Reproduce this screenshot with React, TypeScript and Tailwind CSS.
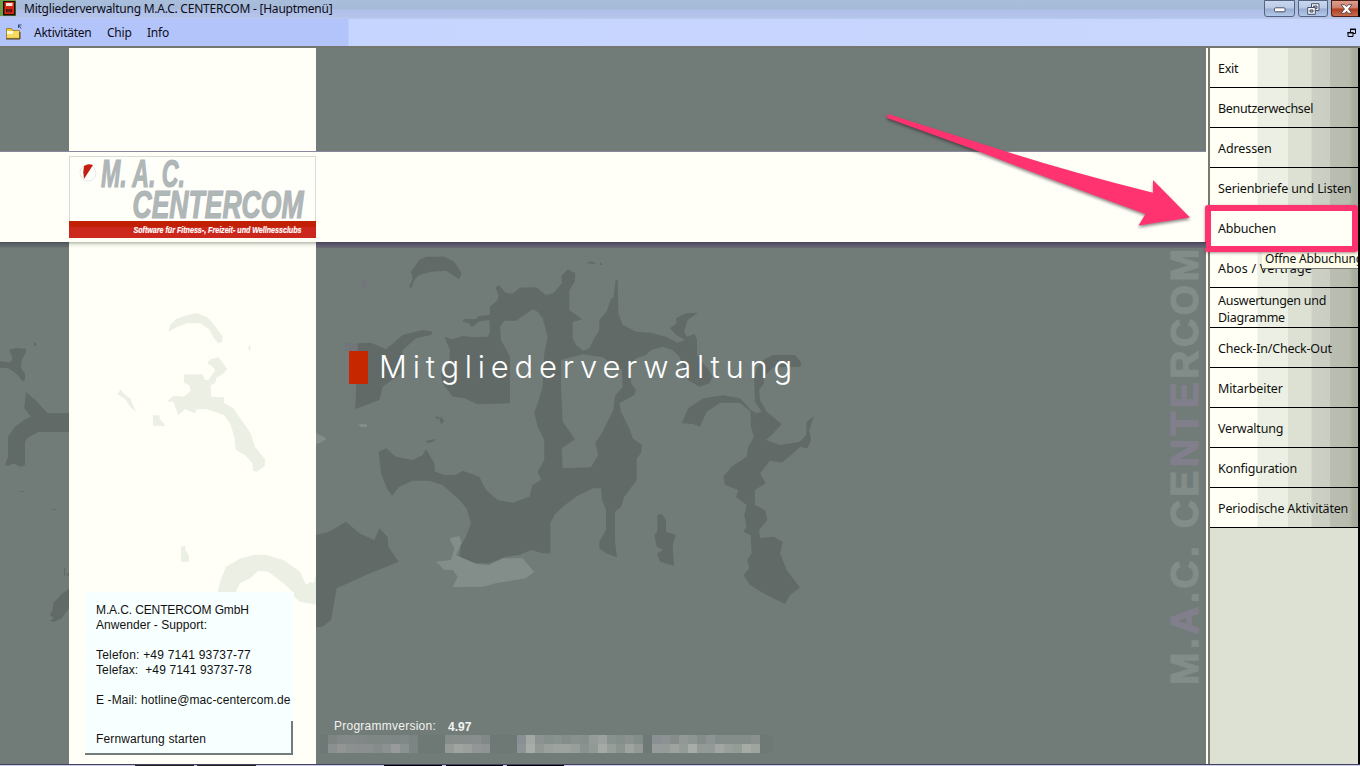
import React from "react";

const UI = "font-['Noto_Sans',sans-serif]";
const DARK = "#616a66";
const PALE = "#ecefe3";

type Item = { label: string; active?: boolean; cls: string };

const items: Item[] = [
  { label: "Exit", cls: "tracking-[-0.3px]" },
  { label: "Benutzerwechsel", cls: "tracking-[-0.33px]" },
  { label: "Adressen", cls: "tracking-[-0.1px]" },
  { label: "Serienbriefe und Listen", cls: "tracking-[-0.12px]" },
  { label: "Abbuchen", active: true, cls: "tracking-[-0.2px]" },
  { label: "Abos / Verträge", cls: "tracking-[0.2px]" },
  { label: "Auswertungen und Diagramme", cls: "tracking-[-0.28px]" },
  { label: "Check-In/Check-Out", cls: "tracking-[-0.2px]" },
  { label: "Mitarbeiter", cls: "tracking-[-0.1px]" },
  { label: "Verwaltung", cls: "tracking-[-0.2px]" },
  { label: "Konfiguration", cls: "tracking-[-0.15px]" },
  { label: "Periodische Aktivitäten", cls: "tracking-[-0.18px]" },
];

function TitleBar() {
  return (
    <header className="flex h-[19px] shrink-0 items-start bg-[linear-gradient(180deg,#a9bedb_0px,#a5bad8_9px,#b0bfe9_10px,#b4c4ea_17px,#b9cce9_19px)]">
      <svg width="16" height="17" viewBox="0 0 16 17" className="shrink-0">
        <rect width="16" height="16" fill="#6d9c4b" />
        <rect x="3" y="1" width="12.5" height="14.5" fill="#1d0f0c" />
        <rect x="4.5" y="2" width="9.5" height="12" fill="#d22a16" />
        <rect x="6" y="3" width="6.5" height="3" fill="#f6e6dd" />
        <path d="M6.5 9v3M8 9.5v3M10 9.5v3M11.500 9v3M6 10h6" stroke="#40100a" />
      </svg>
      <h1 className={`ml-2 flex-1 whitespace-nowrap text-[12px] leading-[17px] tracking-[-0.23px] text-[#0c0d18] ${UI}`}>
        Mitgliederverwaltung M.A.C. CENTERCOM - [Hauptmenü]
      </h1>
      <div className="flex h-[17px] gap-[3px]">
        <button aria-label="Minimieren" className="flex h-[17px] w-[31px] items-center justify-center rounded-b-[3px] border border-[#56627f] bg-[linear-gradient(180deg,#c9d8ee_0%,#b9cae6_48%,#98add2_52%,#b1c9e8_100%)]">
          <svg width="12" height="6" viewBox="0 0 12 6" className="mt-[3px]"><rect x=".5" y=".8" width="10.500" height="4" rx="1" fill="#fff" stroke="#4c5165" /></svg>
        </button>
        <button aria-label="Verkleinern" className="flex h-[17px] w-[30px] items-center justify-center rounded-b-[3px] border border-[#56627f] bg-[linear-gradient(180deg,#c9d8ee_0%,#b9cae6_48%,#98add2_52%,#b1c9e8_100%)]">
          <svg width="13" height="12" viewBox="0 0 13 12" className="shrink-0" fill="#f4f5fb" stroke="#4c5165">
            <path d="M4.500.700h7.500v6.800h-7.500z" /><path d="M6.500 3h3.500v2.500h-3.500z" fill="#a9bbdc" />
            <path d="M.7 4.500h7.600v6.800H.7z" /><path d="M3 7h3v2H3z" fill="#a9bbdc" />
          </svg>
        </button>
        <button aria-label="Schließen" className="flex h-[17px] w-[27px] items-center justify-center rounded-bl-[3px] border border-r-0 border-[#4f1f1c] bg-[linear-gradient(180deg,#dda08e_0%,#cd7c68_48%,#af3c1f_52%,#c66c4c_100%)]">
          <svg width="13" height="10" viewBox="0 0 13 10" className="ml-[2px]">
            <path d="M1 .7h3.500l2 2 2-2H12L8.500 5 12 9.300H8.500l-2-2-2 2H1L4.500 5z" fill="#fff" stroke="#55484e" strokeWidth=".9" />
          </svg>
        </button>
        <div className="-ml-[3px] h-[17px] w-[2px] bg-black" />
      </div>
    </header>
  );
}

function MenuBar() {
  return (
    <nav className="flex h-[29px] shrink-0 items-center border-b-2 border-[#73776f] bg-[linear-gradient(90deg,#b3c4fa_0px,#b3c4fa_348px,#c6d5ff_349px,#c9d6fd_1358px)]">
      <svg width="18" height="17" viewBox="0 0 18 17" className="ml-[5px] shrink-0">
        <path d="M1.500 4.500h5l1.500 2h6.500v8h-13z" fill="#e9c23f" stroke="#96762a" strokeWidth=".8" />
        <path d="M2 7h12v6.500H2z" fill="#f6da62" />
        <path d="M2 7h6v3H2z" fill="#fffbd0" />
        <path d="M1 15h14V8" stroke="#524018" fill="none" />
        <path d="M13 1h3.500M13.500 1v3M14 1.500l2 3" stroke="#2b3a66" strokeWidth=".9" fill="none" />
      </svg>
      <ul className={`ml-[11px] flex flex-1 gap-[15.5px] text-[12px] leading-4 tracking-[-0.25px] text-[#0c0d18] ${UI}`}>
        <li>Aktivitäten</li>
        <li>Chip</li>
        <li>Info</li>
      </ul>
      <svg width="10" height="10" viewBox="0 0 10 10" className="mr-[3px] shrink-0" fill="none" stroke="#000">
        <path d="M3.500 4V1.500h5v4H6" /><path d="M3 1.300h6" strokeWidth="1.500" />
        <path d="M1 4.500h5v4H1z" /><path d="M.5 4.700h6" strokeWidth="1.500" />
      </svg>
    </nav>
  );
}

function Stains() {
  return (
    <svg className="pointer-events-none absolute inset-0" width="1206" height="716" viewBox="0 48 1206 716">
      <g transform="translate(0 300) scale(.33333)">
        <g fill={DARK}>
          <path d="M28 150L45 144L78 146L77 158L65 180L63 203L75 222L75 240L68 244L50 222L25 205L0 203V183L30 188L38 175Z" />
          <path d="M78 276L110 304L142 339H207V396H115L85 412L75 425V495L62 500L45 492L35 492L25 498L15 495L24 470V410L45 380L72 360L92 350L73 325Z" />
          <path d="M207 868L185 882L160 910L158 930L150 945L162 955L150 962L160 966L185 955L207 925Z" />
          <path d="M102 128h6l2 6-5 5-3-5zM60 574h12v2h-12zM155 627h13v2h-13zM196 822l11-3v10zM192 803h3v25h-3z" />
        </g>
        <g fill={PALE}>
          <path d="M505 95L512 72L530 56L560 46L590 39L622 52L640 72L655 92L668 108L666 126L655 130L640 112L628 88L600 70H560L530 82Z" />
          <path d="M552 223H608L614 240H625L646 210L635 198L622 190L630 178L655 172L668 188L682 208L665 225L650 232L645 250L632 256L634 290L672 292V308L700 325L728 365L752 400L765 440L795 478L794 498L770 515L759 512L757 490L735 465L707 450L703 410L690 370L672 345L620 328H590L585 340L555 328L535 345L520 305H500L520 287L552 290L572 272L568 256L552 248Z" />
          <path d="M353 282L362 268L370 280L392 296L398 315L409 336L392 322L378 300ZM459 346H480L478 356L490 368L496 380L480 377H459ZM738 152L752 133L750 155L744 145ZM543 740L556 738V750L567 768V785H543Z" />
          <path d="M652 879L662 840L678 800L720 776L760 765H800L850 780L900 815L918 855L930 845L940 850L948 828V914L900 905L882 890V879L850 850L805 815L775 812L750 835L720 850L705 879Z" />
        </g>
      </g>
      <g transform="translate(316 240) scale(.33333)">
        <g fill={DARK} fillRule="evenodd">
          <path d="M385 290L410 298L440 288L470 292L515 290L522 275L520 240L490 244L468 262L458 250L440 245L444 236L478 238L490 228L522 225V200L545 180L548 165L538 142L550 136L568 158L590 161L612 143L660 142L690 165L712 160L738 130L736 108L755 88L778 100L776 125L760 150V210L798 238L785 242L770 245V295L780 315L802 333L820 325L835 295L850 270V240L872 215L884 178L893 172L899 118L905 122L907 220L920 255L960 275L1005 278L1050 290L1085 308L1108 300L1080 285L1062 265L1082 250L1080 235L1110 220L1145 218L1115 240L1104 275L1113 290L1136 282L1143 300V345L1160 370L1175 385L1190 410L1180 430L1150 440L1115 420L1110 400L1090 350L1070 330L1040 320L1005 330L990 345L960 355L945 385V430L960 450L955 465L910 490L915 515L942 570L950 595L978 615L975 640L962 655V720L925 770L915 800L897 815V905L903 952L870 940L850 925V905L870 870V810L858 780L855 745H830L780 770L740 800L715 825L703 850V940H680L645 930L610 945L570 950L520 970H480L430 950L435 915L450 890L465 850L452 805L430 780L380 735L340 722H290L250 740L228 767L215 750L195 700L188 635L210 625L240 650L290 660L320 645L330 628L355 670L357 695L385 705H420L440 692L490 710L510 750L545 780L590 788L640 770L650 735L675 720L665 695L685 660V600L665 560L655 520L665 490L680 440L685 340L695 290L680 235L665 215L650 208L600 242L565 242L552 260L555 300L582 350V490L485 493L445 475L410 470L380 430L375 400L400 370L402 330ZM735 360L800 343L860 352L918 390L920 440L897 468L892 510L860 575L838 610L847 645L825 682L740 685L737 625L777 598L740 545L735 440Z" />
          <path d="M285 95L310 60L330 50H385L415 65L437 100L430 118L390 92L345 95L310 105L295 120L285 146L280 138L290 118Z" />
          <path d="M125 310L165 308L210 328L260 285L320 270L350 275L345 285L300 295L260 330L255 400L200 440L190 480L150 495L118 507Z" />
          <path d="M0 885L40 875L90 845L130 880L175 900L190 865L215 890L217 920L248 965L150 1005L62 1045L45 1140L20 1160L0 1162Z" />
          <path d="M358 530h12v6h-10zM375 530l10 12-8 10-7-10zM330 602l30-5-8 8-16 5z" />
        </g>
        <path d="M400 895L430 888L437 910L420 945L480 972L520 975L560 955H620L645 985L655 995L630 1015L540 1030L500 1040L410 1042L425 1010L410 990H385L360 965L405 960L415 925ZM128 553h25v8h-20zM0 578l32 18-18 12-14 4z" fill="#838d89" />
        <path d="M138 120h12v24h-12zM88 310h37v22h-37z" fill="#746f80" opacity=".6" />
      </g>
      <g transform="translate(560 240) scale(.33333)" fill={DARK}>
        <path d="M365 550L385 505L430 475L490 466L540 475L572 510L590 520L605 515L585 485L583 420L590 385L610 360L640 345H705L725 370L720 380L640 382L612 410V430L597 450L600 480L620 515L665 552L640 580L618 600L660 615L720 605L738 585L740 545L762 528L748 570L753 600L742 625L720 620L690 648L665 668L630 662L600 700L617 730L585 750V795L615 810L622 840L597 870L600 895L640 890L668 905L660 940L680 990L720 1043L690 1065L675 1092L620 1065L570 1035L550 1005L568 985L562 960L575 940L572 885L550 875L560 860L553 825L560 795L528 770L535 750L495 735L490 710L515 680L560 650L565 620L582 590L573 560L572 515L540 488H480L440 515L420 560L400 552Z" />
        <path d="M292 825L305 822L318 840V875L348 885L338 915L342 978L300 965L292 940L310 930L290 920L283 885L292 875ZM78 70l18-6 12 8zM120 66l9 8h-9z" />
      </g>
      <g fontFamily="'Liberation Sans', sans-serif" fontWeight="700">
        <text transform="translate(1198 685) rotate(-90)" fontSize="39" textLength="436" fill="#828c88" stroke="#828c88" strokeWidth="1.3">
          M.<tspan fill="#817f8c" stroke="#817f8c">A</tspan>.C. CE<tspan fill="#817f8c" stroke="#817f8c">NTE</tspan>RCOM
        </text>
      </g>
    </svg>
  );
}

function Logo() {
  return (
    <svg width="247" height="82" viewBox="69 156 247 82" className="block" fontFamily="'Liberation Sans', sans-serif" fontWeight="700" fontStyle="italic">
      <rect x="69.500" y="156.500" width="246" height="81" fill="#fffffa" stroke="#d9dcd2" />
      <circle cx="88" cy="173" r="8" fill="#fffffc" stroke="#dedfdd" strokeWidth=".7" />
      <path d="M84 166q4-3 9-1L84 179q-1.500-7 0-13z" fill="#c41e10" />
      <g fill="#aeb8b5" stroke="#b0b2b9" strokeWidth="1.2">
        <text x="101" y="187" fontSize="38" textLength="84" lengthAdjust="spacingAndGlyphs">M. A. C.</text>
        <text x="132.500" y="217.500" fontSize="38" textLength="171" lengthAdjust="spacingAndGlyphs">CENTERCOM</text>
      </g>
      <rect x="69" y="221" width="247" height="6" fill="#c22005" />
      <rect x="69" y="227" width="247" height="11" fill="#cc271d" />
      <text x="133.500" y="233.300" fontSize="9.500" textLength="168" lengthAdjust="spacingAndGlyphs" fill="#fff" stroke="#fff" strokeWidth=".2">
        Software für Fitness-, Freizeit- und Wellnessclubs
      </text>
    </svg>
  );
}

function Support() {
  return (
    <section className="ml-[16px] w-[209px] bg-[#f8ffff] font-['Liberation_Sans',sans-serif] text-[12px] leading-[15px] text-[#111]">
      <div className="h-[129px] pl-[11px] pt-[11px] whitespace-pre">
        <p className="tracking-[-0.12px]">M.A.C. CENTERCOM GmbH</p>
        <p className="tracking-[0.05px]">Anwender - Support:</p>
        <p className="mt-[15px] tracking-[0.2px]">Telefon: +49 7141 93737-77</p>
        <p className="tracking-[0.12px]">Telefax:  +49 7141 93737-78</p>
        <p className="mt-[15px] tracking-[0.11px]">E -Mail: hotline@mac-centercom.de</p>
      </div>
      <button className="block h-[34px] w-[208px] border-r-2 border-b-2 border-[#727c78] pl-[11px] pt-[5px] text-left tracking-[0.14px]">
        Fernwartung starten
      </button>
    </section>
  );
}

const censored = [
  { w: "w-[90px]", ml: "ml-[8px]", top: ["#7d8482", "#838988", "#828988", "#828887", "#7f8784", "#7f8784", "#808786", "#7e8784", "#828887", "#7b8481"], low: ["#8c8f90", "#939595", "#8b9190", "#8c8f90", "#8b908f", "#858b8a", "#8b9090", "#999a9b", "#8b9190", "#7c8582"] },
  { w: "w-[45px]", ml: "ml-[27px]", top: ["#858d8b", "#868d8b", "#868d8b", "#888d8d", "#828887"], low: ["#949b98", "#a0a5a1", "#9ba09d", "#929696", "#909495"] },
  { w: "w-[126px]", ml: "ml-[27px]", top: ["#8a8f93", "#a2a8a3", "#8b9291", "#858f8c", "#89918f", "#858d8b", "#8a908f", "#878f8d", "#959b98", "#9ca19f", "#87918d", "#858e8b", "#8a918f", "#838d88"], low: ["#8d9496", "#a8ada8", "#929995", "#9ba09c", "#9da39f", "#9da39f", "#979e9b", "#8a9390", "#929a97", "#a6aaa7", "#969e9a", "#8c9491", "#a0a4a0", "#939a97"] },
  { w: "w-[108px]", ml: "ml-[9px]", top: ["#8a8f94", "#8c9291", "#858d8b", "#929895", "#8d9593", "#838c89", "#8d9393", "#838e8a", "#858d8b", "#858d8b", "#848d8a", "#89908e"], low: ["#969c9c", "#949b98", "#9ea39f", "#949c98", "#a7ada8", "#939a97", "#929a97", "#a2a7a3", "#999f9c", "#949c98", "#a6aba5", "#9fa49e"] },
];

function Mosaic() {
  return (
    <div className="flex h-[18px] w-[453px] bg-[#6e7875] pr-[9px]">
      {censored.map((b, i) => (
        <div key={i} className={`grid h-[18px] shrink-0 grid-rows-2 ${b.w} ${b.ml}`}>
          {[b.top, b.low].map((row, j) => (
            <div key={j} className="flex">
              {row.map((c, k) => (
                <span key={k} className="flex-1" style={{ backgroundColor: c }} />
              ))}
            </div>
          ))}
        </div>
      ))}
    </div>
  );
}

function Canvas() {
  return (
    <main className="relative flex w-[1206px] shrink-0 flex-col bg-[#717b77]">
      <div className="flex h-[103px] shrink-0">
        <div className="ml-[69px] w-[247px] bg-[#fffff8]" />
      </div>
      <div className="h-[91px] shrink-0 border-t border-[#8b879c] bg-[#fffff8] pl-[69px] pt-[4px]">
        <Logo />
      </div>
      <div className="flex min-h-0 flex-1">
        <div className="w-[69px] shrink-0 bg-[linear-gradient(180deg,#474d55_0px,#5b6167_2px,#666e6e_5px,#717b77_6px)]" />
        <div className="flex w-[247px] shrink-0 flex-col bg-[linear-gradient(180deg,#b7bbb0_0px,#eeefe5_3px,#fffff8_6px)] pt-[350px]">
          <div className="relative z-10">
            <Support />
          </div>
        </div>
        <div className="relative z-10 flex flex-1 flex-col">
          <div className="h-[6px] bg-[linear-gradient(180deg,#433f55_0px,#57546a_2px,#615e70_4px,#666d6c_6px)]" />
          <div className="mt-[103px] ml-[33px] flex h-[33px] items-center">
            <span className="h-[33px] w-[19px] bg-[#c72700]" />
            <h2 className="-mt-[3px] ml-[11px] whitespace-nowrap font-['Inter',sans-serif] text-[31px] leading-[33px] font-light tracking-[5.750px] text-white">
              Mitgliederverwaltung
            </h2>
          </div>
          <div className="mt-[334px] ml-[18px] flex gap-[12px] font-['Liberation_Sans',sans-serif] text-[12px] leading-[16px] text-[#f1f3f1]">
            <span className="tracking-[0.25px]">Programmversion:</span>
            <b className="pt-px">4.97</b>
          </div>
          <div className="ml-[4px]">
            <Mosaic />
          </div>
        </div>
      </div>
      <Stains />
      <svg className="pointer-events-none absolute top-0 left-0 z-20" width="1206" height="240" viewBox="0 48 1206 240">
        <path d="M888.500 114.200Q885.500 116 888 118.300L970 148Q1060 183 1145.500 214L1138.500 225.500L1190 217.500L1153 180V192.700Q1070 172 1003 150.500Z" fill="#ff336f" className="drop-shadow-[0_2px_1.500px_rgba(40,20,30,0.5)]" />
      </svg>
    </main>
  );
}

function Sidebar() {
  return (
    <aside className={`relative flex w-[148px] shrink-0 flex-col bg-[#dde1d4] text-[12.5px] leading-[17px] text-[#10100f] ${UI}`}>
      {items.map((it) => (
        <button
          key={it.label}
          className={`flex h-10 shrink-0 items-center border-b border-black pt-[2px] pl-2 text-left ${it.cls} ${
            it.active
              ? "bg-[#fffff8]"
              : "bg-[linear-gradient(90deg,#fffff6_0px,#fffff6_47px,#ecf0e4_48px,#ecf0e4_78px,#dde1d4_78px,#dde1d4_101px,#cdd1c5_102px,#cacec2_120px,#babeb2_120px,#b8bcaf_139px,#a9ad9f_143px,#a7ab9d_148px)]"
          }`}
        >
          <span className={it.label.length > 25 ? "w-[120px]" : "whitespace-nowrap"}>{it.label}</span>
        </button>
      ))}
      <div className="absolute top-[203px] left-[52px] h-[18px] w-[96px] overflow-hidden border-b border-[#777] bg-[#fdfde9] pl-[3px] text-[12px] leading-[16px] tracking-[-0.15px] whitespace-nowrap">
        Öffne Abbuchung
      </div>
      <div className="absolute top-[157px] -left-[5px] h-[47px] w-[153px] rounded-[3px] border-[6px] border-[#ff336f] shadow-[0_1px_3px_rgba(90,30,50,.5)]" />
    </aside>
  );
}

export default function App() {
  return (
    <div className="flex h-[766px] w-[1360px] flex-col overflow-hidden bg-[#717b77]">
      <TitleBar />
      <MenuBar />
      <div className="flex h-[716px] shrink-0">
        <Canvas />
        <div className="w-[2px] bg-[#fffff8]" />
        <div className="w-[2px] bg-[#777a6d]" />
        <Sidebar />
        <div className="w-[2px] bg-black" />
      </div>
      <footer className="flex h-[2px] shrink-0 border-t border-[#414060] bg-[#cfd0e6]">
        <span className="ml-[135px] w-[59px] bg-[#222]" />
        <span className="ml-[3px] w-[59px] bg-[#222]" />
        <span className="ml-[128px] w-[58px] bg-black" />
        <span className="ml-[4px] w-[57px] bg-black" />
        <span className="ml-[4px] w-[57px] bg-black" />
      </footer>
    </div>
  );
}
